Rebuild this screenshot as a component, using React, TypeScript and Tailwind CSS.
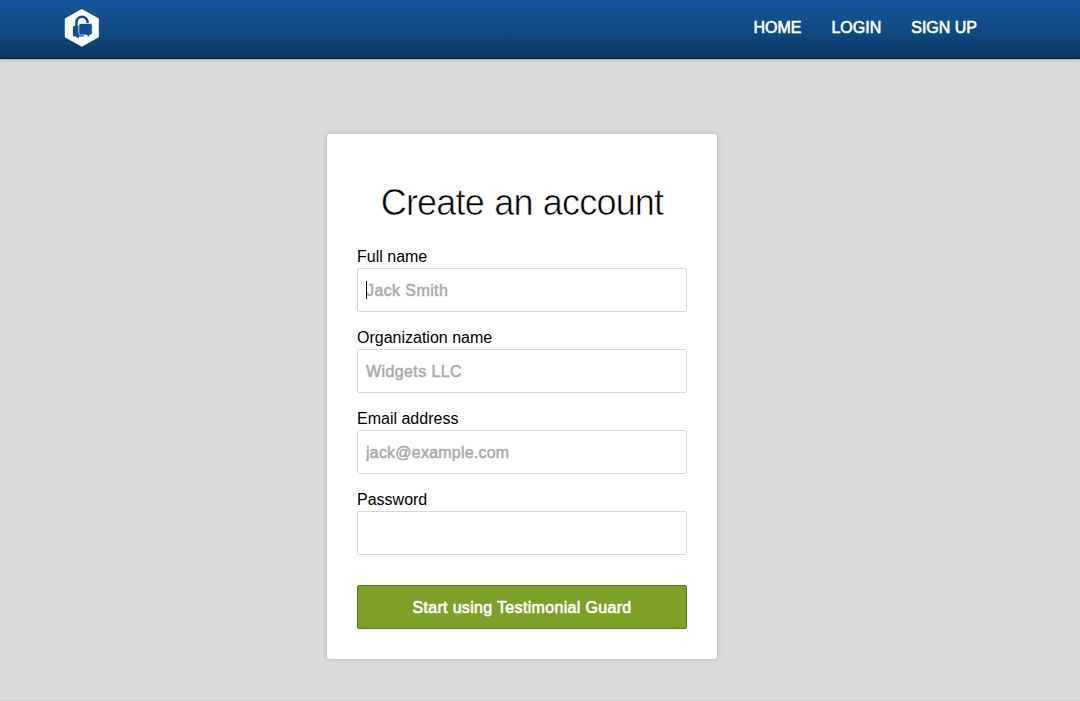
type FieldProps = {
  label: string;
  placeholder?: string;
  type?: string;
  spacing?: string;
  caret?: boolean;
};

function Field({ label, placeholder, type = "text", spacing = "", caret = false }: FieldProps) {
  return (
    <label className="block h-[81px] text-base leading-[23px] text-black">
      <span className="block h-[23px]">{label}</span>
      <span className="relative block">
        <input
          type={type}
          placeholder={placeholder}
          className={`block h-11 w-full rounded-[2px] border border-[#d9d9d9] bg-white px-2 pt-0.5 text-base outline-none placeholder:text-[#a9a9a9] placeholder:opacity-100 placeholder:[-webkit-text-stroke:0.5px_#a9a9a9] ${spacing}`}
        />
        {caret && <span className="absolute top-[13px] left-[9px] h-[18px] w-px bg-black" />}
      </span>
    </label>
  );
}

function Logo() {
  return (
    <svg width="36" height="40" viewBox="0 0 36 40" aria-hidden="true">
      <path d="M17.8 1 34.8 10.5V29.3L17.8 38.8.8 29.3V10.5Z" fill="#fff" />
      <path d="M12.4 18.5V14.4a5.6 5.6 0 0 1 11.2 0V17" fill="none" stroke="#124e8d" strokeWidth="2.5" />
      <path d="M10.3 17.8H20V28.5H14.8L14.4 30.6L11.9 28.5H10.3A1.4 1.4 0 0 1 8.9 27V19.3A1.4 1.4 0 0 1 10.3 17.8Z" fill="#124e8d" />
      <path d="M16.6 15.5H26.4A1.8 1.8 0 0 1 28.2 17.3V25.2A1.8 1.8 0 0 1 26.4 27H25.6L25.1 29.4L22.4 27H16.6A1.8 1.8 0 0 1 14.8 25.2V17.3A1.8 1.8 0 0 1 16.6 15.5Z" fill="#124e8d" stroke="#fff" strokeWidth=".7" />
    </svg>
  );
}

export default function App() {
  return (
    <div className="flex h-[701px] w-[1080px] flex-col overflow-hidden border-b border-[#d3d3d3] bg-[#dbdbdb] font-['Liberation_Sans',Arial,sans-serif]">
      <header className="flex h-[59px] shrink-0 items-start justify-between border-b border-[#07192d] bg-linear-to-b from-[#12569b] via-[#114b86] to-[#0c3762] pr-[103px] pl-[64px] shadow-[0_1px_3px_rgba(0,0,0,0.22)]">
        <a href="#" className="mt-2" aria-label="Testimonial Guard">
          <Logo />
        </a>
        <nav className="mt-4 flex gap-[30px] text-base leading-6 text-white [-webkit-text-stroke:0.6px_white]">
          <a href="#">HOME</a>
          <a href="#">LOGIN</a>
          <a href="#">SIGN UP</a>
        </nav>
      </header>
      <main className="ml-[327px] pt-[75px]">
        <form className="h-[525px] w-[390px] rounded-[3px] bg-white px-[30px] pt-[45px] shadow-[0_0_5px_rgba(0,0,0,0.2)]">
          <h1 className="mb-[19px] text-center text-[36px] leading-[47px] tracking-[-0.8px] [word-spacing:1px] whitespace-nowrap text-black [-webkit-text-stroke:0.6px_white]">
            Create an account
          </h1>
          <Field label="Full name" placeholder="Jack Smith" spacing="tracking-[0.4px]" caret />
          <Field label="Organization name" placeholder="Widgets LLC" spacing="tracking-[0.4px]" />
          <Field label="Email address" placeholder="jack@example.com" spacing="tracking-[0.22px]" />
          <Field label="Password" type="password" />
          <button
            type="button"
            className="mt-4 block h-11 w-full rounded-[2px] border border-[#59791a] bg-[#7da028] pt-0.5 text-center text-base tracking-[0.33px] text-white [-webkit-text-stroke:0.6px_white]"
          >
            Start using Testimonial Guard
          </button>
        </form>
      </main>
    </div>
  );
}
